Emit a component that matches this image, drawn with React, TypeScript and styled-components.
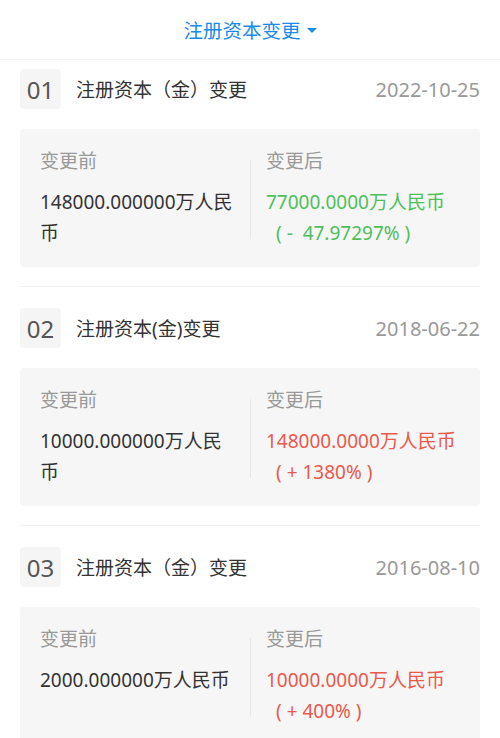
import React from "react";
import styled, { createGlobalStyle } from "styled-components";

type Trend = "down" | "up";

interface ChangeRecord {
  index: string;
  title: string;
  date: string;
  before: string;
  after: string;
  percent: string;
  trend: Trend;
}

const records: ChangeRecord[] = [
  {
    index: "01",
    title: "注册资本（金）变更",
    date: "2022-10-25",
    before: "148000.000000万人民币",
    after: "77000.0000万人民币",
    percent: "( -\u00a0\u00a047.97297% )",
    trend: "down",
  },
  {
    index: "02",
    title: "注册资本(金)变更",
    date: "2018-06-22",
    before: "10000.000000万人民币",
    after: "148000.0000万人民币",
    percent: "( + 1380% )",
    trend: "up",
  },
  {
    index: "03",
    title: "注册资本（金）变更",
    date: "2016-08-10",
    before: "2000.000000万人民币",
    after: "10000.0000万人民币",
    percent: "( + 400% )",
    trend: "up",
  },
];

const GlobalStyle = createGlobalStyle`
  body {
    margin: 0;
    background: #ffffff;
    font-family: "Noto Sans", "Noto Sans CJK SC", sans-serif;
  }
`;

const Page = styled.div`
  width: 500px;
  background: #ffffff;
`;

const TitleBar = styled.div`
  height: 59px;
  display: flex;
  align-items: center;
  justify-content: center;
  gap: 6px;
  border-bottom: 1px solid #f2f2f2;
  color: #1a8bec;
  font-size: 19.5px;
`;

const Caret = styled.span`
  width: 0;
  height: 0;
  border-left: 5px solid transparent;
  border-right: 5px solid transparent;
  border-top: 5px solid #1a8bec;
  margin-top: 1px;
`;

const Item = styled.div<{ $first?: boolean }>`
  margin: 0 20px;
  padding: ${(props) => (props.$first ? "9px" : "21px")} 0 19px;
  border-bottom: 1px solid #f0f0f0;
`;

const Header = styled.div`
  display: flex;
  align-items: center;
  height: 40px;
`;

const IndexBox = styled.div`
  width: 41px;
  height: 40px;
  border-radius: 4px;
  background: #f5f5f5;
  display: flex;
  align-items: center;
  justify-content: center;
  color: #555555;
  font-size: 24px;
`;

const ItemTitle = styled.div`
  flex: 1;
  margin-left: 15px;
  color: #333333;
  font-size: 19px;
`;

const DateText = styled.div`
  color: #999999;
  font-size: 20px;
`;

const Card = styled.div`
  margin-top: 20px;
  background: #f6f6f6;
  border-radius: 4px;
  padding: 18px 0;
  display: grid;
  grid-template-columns: 230px 1px 1fr;
`;

const Column = styled.div<{ $side: "left" | "right" }>`
  padding: ${(props) => (props.$side === "left" ? "0 10px 0 20px" : "0 10px 0 15px")};
`;

const Divider = styled.div`
  background: #e8e8e8;
  margin: 13px 0 10px;
`;

const Label = styled.div`
  color: #999999;
  font-size: 19px;
  line-height: 28px;
  margin-bottom: 12px;
`;

const Value = styled.div<{ $trend?: Trend }>`
  color: ${(props) =>
    props.$trend === "down"
      ? "#4fbf5b"
      : props.$trend === "up"
      ? "#e9594c"
      : "#333333"};
  font-size: 19px;
  line-height: 31px;
`;

const Percent = styled.span`
  display: block;
  padding-left: 10px;
  white-space: pre;
`;

const App = () => {
  return (
    <Page>
      <GlobalStyle />
      <TitleBar>
        注册资本变更
        <Caret />
      </TitleBar>
      {records.map((r, i) => (
        <Item key={r.index} $first={i === 0}>
          <Header>
            <IndexBox>{r.index}</IndexBox>
            <ItemTitle>{r.title}</ItemTitle>
            <DateText>{r.date}</DateText>
          </Header>
          <Card>
            <Column $side="left">
              <Label>变更前</Label>
              <Value>{r.before}</Value>
            </Column>
            <Divider />
            <Column $side="right">
              <Label>变更后</Label>
              <Value $trend={r.trend}>
                {r.after}
                <Percent>{r.percent}</Percent>
              </Value>
            </Column>
          </Card>
        </Item>
      ))}
    </Page>
  );
};

export default App;
